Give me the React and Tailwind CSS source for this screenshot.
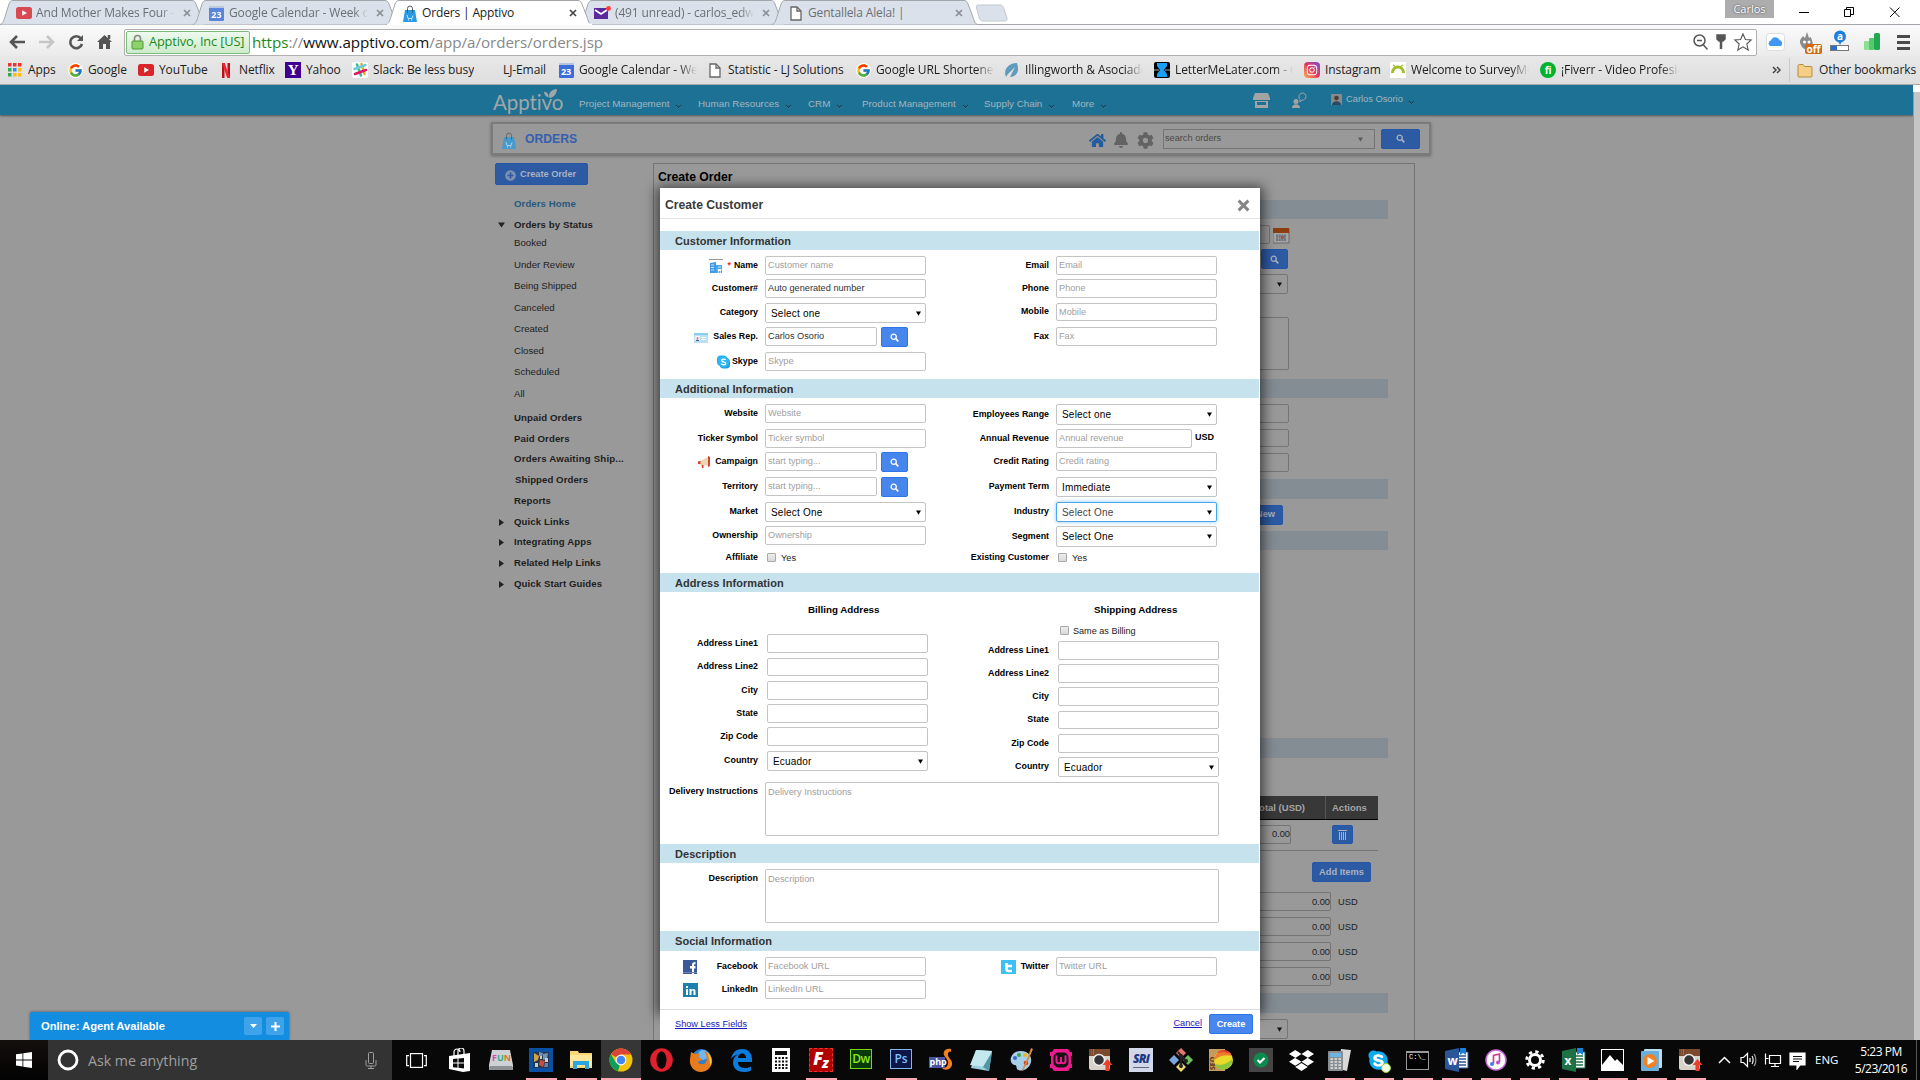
import React from 'react';
import { FaDropbox, FaSkype, FaInstagram, FaHome, FaBell, FaCog } from 'react-icons/fa';
import { FcGoogle } from 'react-icons/fc';

/* ---------- small shared icons ---------- */
const Close = ({ c = '#8a8f95' }) => (
  <svg width="8" height="8" viewBox="0 0 8 8"><path d="M1 1l6 6M7 1L1 7" stroke={c} strokeWidth="1.7" /></svg>
);
const Mag = () => (
  <svg width="9" height="9" viewBox="0 0 9 9" fill="none" stroke="currentColor"><circle cx="3.700" cy="3.700" r="2.600" strokeWidth="1.300" /><path d="M5.700 5.700L8.300 8.300" strokeWidth="1.700" /></svg>
);
const Chev = () => (
  <svg width="7" height="5" viewBox="0 0 8 5" fill="none"><path d="M1 .8L4 3.800 7 .8" stroke="#123d52" strokeWidth="1.200" /><path d="M1 1.800L4 4.800 7 1.800" stroke="#6d98ab" strokeWidth=".5" /></svg>
);
const Arrow = ({ c = '#000' }) => (
  <svg width="5" height="5" viewBox="0 0 5 5"><path d="M0 .4h5L2.500 4.800z" fill={c} /></svg>
);
const YT = () => (
  <svg width="16" height="12" viewBox="0 0 16 12"><rect width="16" height="12" rx="2.500" fill="#d9252a" /><path d="M6.200 3.200v5.600L11 6z" fill="#fff" /></svg>
);
const Cal23 = () => (
  <span className="flex h-[15px] w-[15px] items-center justify-center rounded-[1px] border-t-2 border-[#b4c2dc] bg-[#3c6edb] font-['Open_Sans'] text-[9px] leading-none font-bold text-white">23</span>
);
const Bag = () => (
  <svg width="14" height="17" viewBox="0 0 14 17"><path d="M4.500 7V3.500a2.500 2.500 0 015 0V7" fill="none" stroke="#555" strokeWidth="1" /><path d="M2 5h10l2 12H0z" fill="#2a9be0" /><path d="M4.500 5v2.500M9.500 5v2.500" stroke="#24506e" strokeWidth=".9" /><path d="M4 10l1 3.500h4l1-3" fill="none" stroke="#bfe4fa" strokeWidth="1" /><circle cx="5.500" cy="15" r=".7" fill="#bfe4fa" /><circle cx="8.700" cy="15" r=".7" fill="#bfe4fa" /></svg>
);
const Page = () => (
  <svg width="12" height="15" viewBox="0 0 12 15" fill="#fff" stroke="#666" strokeWidth="1.300"><path d="M1 1h6l4 4v9H1z" /><path d="M7 1v4h4" fill="none" /></svg>
);
const Mail = () => (
  <svg width="17" height="14" viewBox="0 0 17 14"><path d="M0 2h14v11H0z" fill="#5a2a9c" /><path d="M1 4l6 4 6-4" stroke="#fff" strokeWidth="1.800" fill="none" /><circle cx="14.500" cy="2.500" r="2.400" fill="#ff3b3b" /></svg>
);

/* ---------- browser tabs ---------- */
function Tab({ icon, title, active, dim }) {
  return (
    <div className={active ? 'relative z-10 -mr-[14px] h-[25px] w-[207px] shrink-0' : 'relative -mr-[14px] h-[25px] w-[207px] shrink-0'}>
      <svg className="absolute inset-0" width="207" height="25" viewBox="0 0 207 25">
        <path d="M0 24.500C3 24 4 20 5.500 15L9 4C10 1.500 11 .5 13 .5H192C194 .5 195 1.500 196 4L201 17C202 21 203 24 206 24.500" fill={active ? '#fff' : '#dbe1ea'} stroke="#a3a7ac" strokeWidth="1" />
        {active && <path d="M1 24.500H206" stroke="#fff" strokeWidth="2" />}
      </svg>
      <div className="relative flex h-[26px] items-center pl-[15px]">
        <span className="flex w-[17px] shrink-0 items-center justify-center">{icon}</span>
        <span className={(active ? 'text-[#222] ' : 'text-[#6b6f75] ') + (dim ? '[mask-image:linear-gradient(to_right,#000_90%,transparent)] ' : '') + 'ml-[4px] w-[139px] overflow-hidden text-[12px] tracking-[-0.150px] whitespace-nowrap'}>{title}</span>
        <span className="ml-[8px] flex"><Close c={active ? '#444' : '#8a8f95'} /></span>
      </div>
    </div>
  );
}

const bookmarks = [
  { w: 'w-[60px]', t: 'Apps', i: <svg width="14" height="14" viewBox="0 0 14 14">{['#e33', '#e33', '#e33', '#3a5', '#38e', '#fb1', '#3a5', '#fb1', '#fb1'].map((c, k) => <rect key={k} x={(k % 3) * 5} y={Math.floor(k / 3) * 5} width="3.500" height="3.500" fill={c} />)}</svg> },
  { w: 'w-[71px]', t: 'Google', i: <span className="rounded-full bg-white"><FcGoogle size={15} /></span> },
  { w: 'w-[80px]', t: 'YouTube', i: <YT /> },
  { w: 'w-[67px]', t: 'Netflix', i: <svg width="8" height="15" viewBox="0 0 8 15"><path d="M0 0h2.500v15H0zM5.500 0H8v15H5.500z" fill="#b5121b" /><path d="M0 0h2.800L8 15H5.200z" fill="#f02530" /></svg> },
  { w: 'w-[67px]', t: 'Yahoo', i: <span className="flex h-4 w-4 items-center justify-center bg-[#400090] font-['Liberation_Serif'] text-[15px] leading-none font-bold text-white">Y</span> },
  { w: 'w-[130px]', t: 'Slack: Be less busy', i: <svg width="16" height="16" viewBox="0 0 16 16" strokeWidth="2.500" strokeLinecap="round"><rect width="16" height="16" rx="2" fill="#fff" /><path d="M5 2.500l4 11" stroke="#3eb991" /><path d="M9.500 2l3 10" stroke="#e9a820" /><path d="M2.500 7l11-4" stroke="#70cadb" /><path d="M3 12l11-4" stroke="#e01765" /></svg> },
  { w: 'w-[76px]', t: 'LJ-Email', i: null },
  { w: 'w-[149px]', t: 'Google Calendar - We', i: <Cal23 />, f: 1 },
  { w: 'w-[148px]', t: 'Statistic - LJ Solutions', i: <Page /> },
  { w: 'w-[149px]', t: 'Google URL Shortener', i: <span className="rounded-full bg-white"><FcGoogle size={15} /></span>, f: 1 },
  { w: 'w-[150px]', t: 'Illingworth & Asociados', i: <svg width="16" height="16" viewBox="0 0 16 16"><path d="M2 15C-1 8 4 1 13 1c3 9-1 14-7 14L11 5 4 12z" fill="#5e9bbd" /></svg>, f: 1 },
  { w: 'w-[150px]', t: 'LetterMeLater.com - C', i: <svg width="16" height="16" viewBox="0 0 16 16"><rect width="16" height="16" rx="2" fill="#000" /><path d="M3 1h10v3L10 8l3 4v3H3v-3l3-4-3-4z" fill="#18a0f5" /><path d="M0 8h5M11 8h5" stroke="#555" strokeWidth="2" /></svg>, f: 1 },
  { w: 'w-[86px]', t: 'Instagram', i: <span className="flex h-4 w-4 items-center justify-center rounded-[4px] bg-gradient-to-tr from-[#fdb04a] via-[#e0305e] to-[#7a3bd0] text-white"><FaInstagram size={12} /></span> },
  { w: 'w-[150px]', t: 'Welcome to SurveyMon', i: <svg width="16" height="16" viewBox="0 0 16 16"><rect width="16" height="16" fill="#fff" /><path d="M2.500 11c0-8 11-8 11 0" fill="none" stroke="#a0bd2c" strokeWidth="3" /><path d="M3 3l3 2M13 3l-3 2" stroke="#a0bd2c" strokeWidth="1.500" /></svg>, f: 1 },
  { w: 'w-[150px]', t: '¡Fiverr - Video Profesion', i: <span className="flex h-4 w-4 items-center justify-center rounded-full bg-[#00b22d] text-[10px] leading-none font-bold text-white">fi</span>, f: 1 },
];

function Chrome() {
  return (
    <div className="h-[85px] shrink-0 bg-white font-['Open_Sans',sans-serif]">
      <div className="flex h-6 items-start">
        <Tab icon={<span className="opacity-80"><YT /></span>} title="And Mother Makes Four - Y" dim />
        <Tab icon={<span className="opacity-80"><Cal23 /></span>} title="Google Calendar - Week of" dim />
        <Tab icon={<Bag />} title="Orders | Apptivo" active />
        <Tab icon={<Mail />} title="(491 unread) - carlos_edwa" dim />
        <Tab icon={<Page />} title="Gentallela Alela! |" />
        <svg className="mt-1 ml-[10px]" width="33" height="18" viewBox="0 0 33 18"><path d="M3 1h22c2 0 3 1 3.500 2.500L32 14c.5 2-.5 3-2 3H8c-2 0-3-1-3.500-2.500L1.500 4C1 2 1.500 1 3 1z" fill="#dbe1ea" stroke="#c3c8cf" /></svg>
        <div className="flex-1" />
        <div className="flex h-[18px] w-[49px] items-center justify-center bg-[#adadad] text-[11px] text-white [text-shadow:0_0_2px_#333]">Carlos</div>
        <svg className="ml-[25px]" width="121" height="24" viewBox="0 0 121 24" fill="none" stroke="#000"><path d="M0 12.500h10" /><path d="M45.500 9.500h6v7h-6zM47.500 9V7.500h7v7H52" /><path d="M91 7.500l9.500 9.500M100.500 7.500L91 17" /></svg>
      </div>
      <div className="flex h-8 items-center border-t border-[#a3a7ac] bg-gradient-to-b from-[#fafafa] to-[#ebebeb] pt-[3px]">
        <svg className="ml-[9px] shrink-0" width="106" height="20" viewBox="0 0 106 20" fill="none" strokeWidth="2.600">
          <path d="M16 10H2M8 4L2 10l6 6" stroke="#555" />
          <path d="M30 10h14M38 4l6 6-6 6" stroke="#c6c6c6" />
          <path d="M72 6.500A6 6 0 1073 12" stroke="#555" /><path d="M74 3v6h-6z" fill="#555" stroke="none" />
          <path d="M88 10l7.500-7 7.500 7h-2v7h-4v-5h-3v5h-4v-7z" fill="#555" stroke="none" /><path d="M100 3v4" stroke="#555" />
        </svg>
        <div className="ml-[9px] flex h-[27px] w-[1633px] items-center rounded-[2px] border border-[#b0b0b0] bg-white">
          <div className="ml-px flex h-[23px] w-[124px] shrink-0 items-center rounded-[2px] border border-[#7dbb7a] bg-gradient-to-b from-[#eefaee] to-[#cdebcb] pl-1">
            <svg width="13" height="16" viewBox="0 0 13 16"><path d="M3.500 8V4.500a3 3 0 016 0V8" fill="none" stroke="#888" strokeWidth="1.600" /><rect x="1" y="7" width="11" height="8" rx="1" fill="#8fd16a" stroke="#4f9a3a" /></svg>
            <span className="ml-[5px] text-[12.800px] tracking-[-0.150px] whitespace-nowrap text-[#1a8a1a]">Apptivo, Inc [US]</span>
          </div>
          <span className="ml-[2px] text-[15.200px] tracking-[-0.060px] whitespace-nowrap text-[#888]"><span className="text-[#1a8a1a]">https</span>://<span className="text-[#111]">www.apptivo.com</span>/app/a/orders/orders.jsp</span>
          <div className="flex-1" />
          <svg className="mr-[2px]" width="62" height="20" viewBox="0 0 62 20" fill="none" stroke="#555" strokeWidth="1.500">
            <circle cx="7.500" cy="8.500" r="5.500" /><path d="M5 8.500h5M11.500 13l4 4.500" /><path d="M25 3h8v4l-2 2h-4l-2-2z" fill="#555" /><path d="M29 9v8" strokeWidth="2.500" />
            <path d="M51 2l2.400 5.500 5.800.5-4.400 4 1.400 6-5.200-3.200L45.800 18l1.400-6-4.400-4 5.800-.5z" strokeWidth="1.100" />
          </svg>
        </div>
        <svg className="ml-[9px] shrink-0" width="150" height="24" viewBox="0 0 150 24">
          <rect x=".5" y="3.500" width="18" height="17" rx="3" fill="#fff" stroke="#ddd" /><path d="M4 16a3 3 0 011-5.500 4.500 4.500 0 018.500-.5A3.500 3.500 0 0115 16z" fill="#3f98f5" />
          <path d="M35 15c-3-5 1-7 2-9l2 2 2-6 2 6 2-1c0 3 3 5 1 9-2 5-10 4-11-1z" fill="#8b8b8b" /><circle cx="38.500" cy="12" r="1.500" fill="#fff" /><circle cx="43" cy="12" r="1.500" fill="#fff" />
          <rect x="39" y="14" width="17" height="10" rx="2" fill="#cf6a13" /><text x="40.500" y="22.500" fontSize="10" fontWeight="bold" fill="#fff" fontFamily="Open Sans">off</text>
          <circle cx="74" cy="6.500" r="6" fill="#1c7fe0" /><path d="M72 11h4l-2 4z" fill="#1c7fe0" /><text x="71" y="10" fontSize="10" fontWeight="bold" fill="#fff" fontFamily="Open Sans">a</text>
          <rect x="64.500" y="15.500" width="18" height="5" fill="#fff" stroke="#777" /><path d="M65 16h6v4h-6z" fill="#2a6fd0" />
          <rect x="98" y="11" width="5" height="9" rx="1" fill="#8be08f" /><rect x="103" y="8" width="5" height="12" rx="1" fill="#54c96e" /><rect x="108" y="3" width="6" height="17" rx="1.500" fill="#22a853" />
          <path d="M131 6.500h13M131 12.500h13M131 18.500h13" stroke="#4a4a4a" strokeWidth="3" />
        </svg>
      </div>
      <div className="flex h-[29px] items-center border-b border-[#a8a8a8] bg-gradient-to-b from-[#e8e8e8] to-[#dedede] pl-[7px] text-[12px] tracking-[-0.1px] text-[#1c1c1c]">
        {bookmarks.map((b) => (
          <div key={b.t} className={b.w + ' flex shrink-0 items-center'}>
            <span className="flex w-4 shrink-0 justify-center">{b.i}</span>
            <span className={(b.f ? '[mask-image:linear-gradient(to_right,#000_85%,transparent)] ' : '') + 'ml-[5px] max-w-[118px] overflow-hidden whitespace-nowrap'}>{b.t}</span>
          </div>
        ))}
        <div className="flex-1" />
        <svg width="10" height="8" viewBox="0 0 10 8" fill="none" stroke="#444" strokeWidth="1.500"><path d="M1 1l3 3-3 3M5 1l3 3-3 3" /></svg>
        <div className="ml-[7px] h-6 w-px bg-[#bccbe0]" />
        <svg className="ml-[7px]" width="16" height="15" viewBox="0 0 16 15"><path d="M1 3c0-1 .5-1.500 1.500-1.500H6l1.500 2H14c.7 0 1 .5 1 1V13c0 .7-.3 1-1 1H2c-.7 0-1-.3-1-1z" fill="#f5cf85" stroke="#b98a3a" /></svg>
        <span className="mr-[7px] ml-[6px] w-[94px] whitespace-nowrap">Other bookmarks</span>
      </div>
    </div>
  );
}

/* ---------- application ---------- */
const nav = [
  ['Project Management', 'w-[119px]'], ['Human Resources', 'w-[110px]'], ['CRM', 'w-[54px]'],
  ['Product Management', 'w-[122px]'], ['Supply Chain', 'w-[88px]'], ['More', 'w-[181px]'],
];

function AppBar() {
  return (
    <div className="flex h-[30px] w-[1913px] shrink-0 items-start bg-[#1d7194] pl-[493px] text-[9.800px] text-[#a3b6be] shadow-[0_1px_2px_#555]">
      <div className="relative mt-[5px] w-[86px] font-['Lato'] text-[20.500px] leading-[24px] tracking-[-0.1px] text-[#a0a6a9]">Apptivo
        <svg className="absolute -top-[2px] left-[50px]" width="15" height="11" viewBox="0 0 16 12"><path d="M7 11C5 5 10 1 15 1c0 5-3 9-8 10zM5 10C2 9 1 6 1 4c3 0 5 2 5 6z" fill="#a0a6a9" /></svg>
      </div>
      {nav.map(([t, w]) => (
        <div key={t} className={w + ' mt-[12px] flex shrink-0 items-center leading-[13px] whitespace-nowrap'}>{t}<span className="mt-[6px] ml-[6px]"><Chev /></span></div>
      ))}
      <svg className="mt-2" width="17" height="16" viewBox="0 0 17 16" fill="#a3a3a3"><path d="M2 0h13l2 5v2H0V5z" /><path d="M2 8h13v7H2z" /><path d="M4 9h9v3H4z" fill="#1d7194" /></svg>
      <svg className="mt-[7px] ml-[21px]" width="16" height="17" viewBox="0 0 16 17"><circle cx="5" cy="9.500" r="2.500" fill="#a3a3a3" /><path d="M1 16c0-5 8-5 8 0z" fill="#a3a3a3" /><path d="M8 5a3.500 3.500 0 113 3l-2 2V7.500A3 3 0 018 5z" fill="none" stroke="#a3a3a3" /></svg>
      <svg className="mt-[9px] ml-[24px]" width="11" height="11" viewBox="0 0 11 11"><rect width="11" height="11" fill="#898989" /><circle cx="5.500" cy="4" r="2.300" fill="#4a3a35" /><path d="M1 11c0-5 9-5 9 0z" fill="#254a62" /></svg>
      <span className="mt-[8px] ml-[4px] flex items-center text-[9.300px] leading-[12px] whitespace-nowrap">Carlos Osorio<span className="mt-[6px] ml-[5px]"><Chev /></span></span>
    </div>
  );
}

const side = [
  ['Orders Home', 'mt-[12px] h-[14px] font-bold tracking-[0.080px] text-[#275a7e]'],
  ['Orders by Status', 'mt-[7px] h-[14px] font-bold tracking-[0.080px]', 'd'],
  ['Booked', 'mt-[4px] h-[14px]'],
  ['Under Review', 'mt-[8px] h-[14px]'],
  ['Being Shipped', 'mt-[7px] h-[14px]'],
  ['Canceled', 'mt-[8px] h-[14px]'],
  ['Created', 'mt-[7px] h-[14px]'],
  ['Closed', 'mt-[8px] h-[14px]'],
  ['Scheduled', 'mt-[7px] h-[14px]'],
  ['All', 'mt-[8px] h-[14px]'],
  ['Unpaid Orders', 'mt-[10px] h-[14px] font-bold tracking-[0.1px]'],
  ['Paid Orders', 'mt-[7px] h-[14px] font-bold tracking-[0.1px]'],
  ['Orders Awaiting Ship...', 'mt-[6px] h-[14px] font-bold tracking-[0.200px]'],
  ['Shipped Orders', 'mt-[7px] h-[14px] pl-px font-bold tracking-[0.060px]'],
  ['Reports', 'mt-[7px] h-[14px] font-bold tracking-[0.1px]'],
  ['Quick Links', 'mt-[7px] h-[14px] font-bold tracking-[0.1px]', 'r'],
  ['Integrating Apps', 'mt-[6px] h-[14px] font-bold tracking-[0.1px]', 'r'],
  ['Related Help Links', 'mt-[7px] h-[14px] font-bold tracking-[0.040px]', 'r'],
  ['Quick Start Guides', 'mt-[7px] h-[14px] font-bold tracking-[0.080px]', 'r'],
];

function Sidebar() {
  return (
    <div className="mt-[8px] w-[158px] shrink-0 text-[9.650px] text-[#1e1e1e]">
      <div className="flex h-[22px] w-[93px] items-center rounded-[2px] border border-[#2457a8] bg-[#2c5aa3] pl-[9px] font-bold text-[#a9b2c0]">
        <svg width="11" height="11" viewBox="0 0 11 11" className="mt-[2px]"><circle cx="5.500" cy="5.500" r="5.300" fill="#7d90b3" /><path d="M5.500 2.500v6M2.500 5.500h6" stroke="#2c5aa3" strokeWidth="1.700" /></svg>
        <span className="ml-[4px] pt-px text-[9.200px] whitespace-nowrap">Create Order</span>
      </div>
      {side.map(([t, c, k]) => (
        <div key={t} className={c + ' flex items-center whitespace-nowrap'}>
          <span className="w-[19px] shrink-0 pl-[3px]">
            {k === 'd' && <svg width="7" height="6" viewBox="0 0 7 6"><path d="M0 .5h7L3.500 5.500z" fill="#222" /></svg>}
            {k === 'r' && <svg width="6" height="7" viewBox="0 0 6 7"><path d="M1 0v7l5-3.500z" fill="#222" /></svg>}
          </span>{t}
        </div>
      ))}
    </div>
  );
}

const DInput = ({ c, children }) => <div className={c + ' flex shrink-0 items-center justify-end rounded-[2px] border border-[#757575] text-[9.300px] text-[#222]'}>{children}</div>;
const DBtn = ({ c, children }) => <div className={c + ' flex shrink-0 items-center justify-center rounded-[2px] border border-[#2457a8] bg-[#2c5aa3] text-[9.300px] font-bold whitespace-nowrap text-[#a9b2c0]'}>{children}</div>;
const DBar = ({ c }) => <div className={c + ' ml-[8px] w-[726px] shrink-0 bg-[#858d94]'} />;

/* order form that stays behind the dialog */
function OrderPanel() {
  return (
    <div className="mt-[8px] flex h-[877px] w-[762px] flex-col overflow-hidden border border-b-0 border-[#757575]">
      <div className="mt-[5px] ml-[4px] h-[17px] text-[12.200px] leading-[16px] font-bold text-[#000]">Create Order</div>
      <DBar c="mt-[14px] h-[19px]" />
      <div className="mt-[6px] flex h-[19px]"><DInput c="ml-[455px] h-[19px] w-[161px]" />
        <svg className="mt-[3px] ml-[3px]" width="17" height="16" viewBox="0 0 17 16"><rect y="1" width="16" height="14" fill="#a5a5a5" stroke="#555" strokeWidth=".7" /><path d="M0 0h16v5H0z" fill="#8c3d12" /><path d="M3 6.500h10v6.500H3z" fill="#6d7380" /><path d="M5.500 6v7M8 6v7M10.500 6v7M3 10h10" stroke="#9a9a9a" strokeWidth=".8" /><rect x="8" y="8" width="3" height="3" fill="#a5573a" /></svg>
      </div>
      <DBtn c="mt-[5px] ml-[607px] h-[20px] w-[27px]"><Mag /></DBtn>
      <DInput c="mt-[5px] ml-[473px] h-[20px] w-[161px] pr-[5px]"><Arrow c="#111" /></DInput>
      <DInput c="mt-[23px] ml-[335px] h-[53px] w-[300px]" />
      <DBar c="mt-[9px] h-[19px]" />
      <DInput c="mt-[6px] ml-[474px] h-[19px] w-[161px]" />
      <DInput c="mt-[6px] ml-[474px] h-[18px] w-[161px]" />
      <DInput c="mt-[6px] ml-[474px] h-[19px] w-[161px]" />
      <DBar c="mt-[7px] h-[20px]" />
      <DBtn c="mt-[6px] ml-[573px] h-[20px] w-[56px]"><span className="ml-[21px]">New</span></DBtn>
      <DBar c="mt-[6px] h-[19px]" />
      <DBar c="mt-[188px] h-[20px]" />
      <div className="mt-[38px] ml-[8px] flex h-[24px] w-[716px] items-center border-b border-black bg-[#383838] text-[9.500px] font-bold text-[#a5a5a5]">
        <span className="w-[643px] pt-px text-right whitespace-nowrap">Total (USD)</span><span className="ml-[20px] h-full w-px bg-[#555]" /><span className="ml-[6px] pt-px">Actions</span>
      </div>
      <div className="ml-[8px] flex h-[31px] w-[716px] border-b border-[#757575] pt-[5px]">
        <DInput c="ml-[569px] h-[19px] w-[60px] pt-px">0.00</DInput>
        <DBtn c="ml-[41px] h-[19px] w-[21px]"><svg width="9" height="11" viewBox="0 0 9 11" stroke="#a9b2c0"><path d="M0 1.500h9M1.500 3v8M3.500 3v8M5.500 3v8M7.500 3v8" fill="none" strokeWidth="1" /></svg></DBtn>
      </div>
      <DBtn c="mt-[11px] ml-[658px] h-[20px] w-[59px] pt-px">Add Items</DBtn>
      <div className="mt-[10px] flex flex-col gap-[6px]">
        {[1, 2, 3, 4].map((n) => <div key={n} className="flex h-[19px] items-center"><DInput c="ml-[516px] h-[19px] w-[161px] pt-[2px]">0.00</DInput><span className="ml-[7px] pt-[2px] text-[9.300px] text-[#222]">USD</span></div>)}
      </div>
      <DBar c="mt-[7px] h-[20px]" />
      <DInput c="mt-[6px] ml-[473px] h-[20px] w-[161px] pr-[5px]"><Arrow c="#111" /></DInput>
    </div>
  );
}

/* ---------- dialog ---------- */
const Bar = ({ c, children }) => <div className={c + ' flex w-[599px] shrink-0 items-center bg-[#c5e2ed] pl-[15px] text-[11px] font-bold tracking-[0.060px] text-[#333]'}><span className="pt-px">{children}</span></div>;

const Box = () => <span className="h-[9px] w-[9px] rounded-[1px] border border-[#a9a9a9] bg-gradient-to-b from-[#eee] to-[#d8d8d8]" />;

function Row({ c, label, icon, ph, val, sel, find, w = 'w-[161px]', after, check, focus, shift }) {
  return (
    <div className={c + ' flex shrink-0 items-center'}>
      <div className="flex h-full w-[98px] shrink-0 items-center justify-end text-[8.850px] font-bold whitespace-nowrap text-black">{icon}{label}</div>
      {check ? (
        <div className="flex items-center pb-px pl-[9px] text-[9.200px] text-[#222]"><Box /><span className="ml-[5px] pt-[2px]">{check}</span></div>
      ) : (
        <div className={(find ? 'w-[112px]' : w) + (shift ? ' ml-[9px]' : ' ml-[7px]') + (focus ? ' border-[#4aa8ea] shadow-[0_0_4px_#8cc8f5]' : ' border-[#c4c4c4]') + (sel ? ' pl-[5px] text-[10px] tracking-[0.200px]' : ' pt-px pl-[2px] text-[9.200px]') + (focus ? ' text-[#444]' : sel ? ' text-black' : ph ? ' text-[#a0a0a0]' : ' text-[#333]') + ' flex h-full items-center rounded-[2px] border bg-white pr-[4px] whitespace-nowrap'}>
          <span className="flex-1">{ph || val || sel}</span>{sel && <Arrow />}
        </div>
      )}
      {find && <div className="ml-[4px] flex h-[20px] w-[27px] items-center justify-center self-start rounded-[2px] border border-[#2f74e8] bg-[#4787ed] text-white"><Mag /></div>}
      {after}
    </div>
  );
}

const Building = () => <svg className="mr-[4px]" width="14" height="14" viewBox="0 0 14 14"><path d="M0 0h14v1H0z" fill="#999" /><path d="M1 4l6-1v11H1z" fill="#3d9be9" /><path d="M7 6h6v8H7z" fill="#4aa4ee" /><path d="M2 6h3M2 8.500h3M2 11h3M9 8h3" stroke="#cfe8fb" /><path d="M8.500 10h4l-.5 2h-3z" fill="#fff" /><circle cx="9.500" cy="13" r=".7" fill="#fff" /><circle cx="11.500" cy="13" r=".7" fill="#fff" /></svg>;
const Card = () => <svg className="mt-[2px] mr-[5px]" width="14" height="10" viewBox="0 0 14 10"><rect width="14" height="10" fill="#b9e0f7" /><path d="M0 0h14v2H0z" fill="#8acbf0" /><path d="M1.500 3h4v5h-4z" fill="#fff" /><circle cx="3.500" cy="5" r="1" fill="#c66" /><path d="M2 8c0-2 3-2 3 0z" fill="#447" /><path d="M7 4.500h5M7 6.500h5" stroke="#fff" /></svg>;
const SkypeIcon = () => <svg className="mr-[2px]" width="13" height="14" viewBox="0 0 14 14"><rect width="11" height="11" rx="4" fill="#22b2ee" /><rect x="3" y="3" width="11" height="11" rx="4" fill="#1c9fe0" /><circle cx="7" cy="7" r="6" fill="#2db6f0" /><path d="M9.300 4.800C8.500 3.500 5 3.500 5 5.300c0 2 4.300 1 4.300 3.200 0 1.800-3.800 2-4.800.3" fill="none" stroke="#fff" strokeWidth="1.500" /></svg>;
const Horn = () => <svg className="mr-[4px]" width="13" height="12" viewBox="0 0 13 12"><path d="M2 5l8-4v9L2 8z" fill="#ead9b4" /><path d="M10 0l2 1v9l-2 1z" fill="#d8432e" /><path d="M0 5.500l2.500-.8v3.600L0 8zM3.500 8.500l2 .5v3H4z" fill="#d8432e" /></svg>;
const Fb = () => <svg className="mr-[20px]" width="14" height="14" viewBox="0 0 14 14"><rect width="14" height="14" fill="#3b5998" /><path d="M9 14V8.500H7V6h2V4.800C9 3 10 2 12.500 2v2.300c-1.200 0-1.500.2-1.500 1V6h1.500v2.500H11V14z" fill="#fff" /><path d="M0 12.500h14" stroke="#6d84b4" /></svg>;
const Li = () => <svg className="mr-[24px]" width="15" height="14" viewBox="0 0 15 14"><rect width="15" height="14" fill="#1d7fae" /><path d="M3 6h2v6H3zM3 3h2v2H3zM6.500 6h2v1c1-1.700 4-1.500 4 1v4h-2V8.500c0-1.200-2-1.200-2 0V12h-2z" fill="#fff" /></svg>;
const Tw = () => <svg className="mr-[5px]" width="15" height="14" viewBox="0 0 15 14"><rect width="15" height="14" fill="#3cc0f5" /><path d="M5.500 3v6c0 1.500.8 2 2 2H11M5.500 6H11" fill="none" stroke="#fff" strokeWidth="2.600" /></svg>;

function Dialog() {
  return (
    <div className="absolute top-[188px] left-[660px] z-20 h-[852px] w-[600px]">
      <div className="h-[822px] bg-white shadow-[0_2px_12px_3px_rgba(0,0,0,0.62)]">
        <div className="flex h-[31px] items-center justify-between border-b border-[#e4e4e4] pr-[10px] pl-[5px]">
          <span className="pt-[4px] text-[12.200px] font-bold text-[#3a3a3a]">Create Customer</span>
          <svg className="mt-[4px]" width="13" height="13" viewBox="0 0 12 12"><path d="M1.500 1.500l9 9M10.500 1.500l-9 9" stroke="#868686" strokeWidth="2.800" /></svg>
        </div>
        <Bar c="mt-[12px] h-[19px]">Customer Information</Bar>
        <div className="flex h-[129px]">
          <div className="w-[291px]">
            <Row c="mt-[6px] h-[19px]" label={<><span className="mr-[3px] text-[#e22]">*</span>Name</>} icon={<Building />} ph="Customer name" />
            <Row c="mt-[4px] h-[19px]" label="Customer#" val="Auto generated number" />
            <Row c="mt-[5px] h-[20px]" label="Category" sel="Select one" />
            <Row c="mt-[4px] h-[19px]" label="Sales Rep." icon={<Card />} val="Carlos Osorio" find />
            <Row c="mt-[6px] h-[19px]" label="Skype" icon={<SkypeIcon />} ph="Skype" />
          </div>
          <div>
            <Row c="mt-[6px] h-[19px]" label="Email" ph="Email" />
            <Row c="mt-[4px] h-[19px]" label="Phone" ph="Phone" />
            <Row c="mt-[5px] h-[18px]" label="Mobile" ph="Mobile" />
            <Row c="mt-[6px] h-[19px]" label="Fax" ph="Fax" />
          </div>
        </div>
        <Bar c="h-[19px]">Additional Information</Bar>
        <div className="flex h-[175px]">
          <div className="w-[291px]">
            <Row c="mt-[6px] h-[19px]" label="Website" ph="Website" />
            <Row c="mt-[6px] h-[19px]" label="Ticker Symbol" ph="Ticker symbol" />
            <Row c="mt-[4px] h-[19px]" label="Campaign" icon={<Horn />} ph="start typing..." find />
            <Row c="mt-[6px] h-[19px]" label="Territory" ph="start typing..." find />
            <Row c="mt-[6px] h-[20px]" label="Market" sel="Select One" />
            <Row c="mt-[4px] h-[19px]" label="Ownership" ph="Ownership" />
            <Row c="mt-[5px] h-[16px]" label="Affiliate" check="Yes" />
          </div>
          <div>
            <Row c="mt-[6px] h-[21px]" label="Employees Range" sel="Select one" />
            <Row c="mt-[4px] h-[19px]" label="Annual Revenue" ph="Annual revenue" w="w-[136px]" after={<span className="ml-[3px] pb-[2px] text-[9px] font-bold">USD</span>} />
            <Row c="mt-[4px] h-[19px]" label="Credit Rating" ph="Credit rating" />
            <Row c="mt-[6px] h-[20px]" label="Payment Term" sel="Immediate" />
            <Row c="mt-[5px] h-[20px]" label="Industry" sel="Select One" focus />
            <Row c="mt-[4px] h-[21px]" label="Segment" sel="Select One" />
            <Row c="mt-[3px] h-[16px]" label="Existing Customer" check="Yes" />
          </div>
        </div>
        <Bar c="h-[19px]">Address Information</Bar>
        <div className="flex h-[190px]">
          <div className="w-[291px]">
            <div className="mt-[11px] h-[14px] pl-[148px] text-[9.800px] leading-[14px] font-bold">Billing Address</div>
            <Row c="mt-[17px] h-[19px]" label="Address Line1" shift />
            <Row c="mt-[5px] h-[18px]" label="Address Line2" shift />
            <Row c="mt-[5px] h-[19px]" label="City" shift />
            <Row c="mt-[4px] h-[19px]" label="State" shift />
            <Row c="mt-[4px] h-[19px]" label="Zip Code" shift />
            <Row c="mt-[5px] h-[20px]" label="Country" sel="Ecuador" shift />
          </div>
          <div>
            <div className="mt-[11px] h-[14px] pl-[143px] text-[9.800px] leading-[14px] font-bold">Shipping Address</div>
            <div className="mt-[7px] flex h-[14px] items-center pl-[109px] text-[9.100px] text-[#222]"><span className="mb-px flex"><Box /></span><span className="ml-[4px] pt-px">Same as Billing</span></div>
            <Row c="mt-[3px] h-[19px]" label="Address Line1" shift />
            <Row c="mt-[4px] h-[19px]" label="Address Line2" shift />
            <Row c="mt-[4px] h-[19px]" label="City" shift />
            <Row c="mt-[5px] h-[18px]" label="State" shift />
            <Row c="mt-[5px] h-[19px]" label="Zip Code" shift />
            <Row c="mt-[4px] h-[20px]" label="Country" sel="Ecuador" shift />
          </div>
        </div>
        <div className="flex h-[62px]">
          <span className="w-[98px] pt-[3px] text-right text-[9px] leading-[13px] font-bold whitespace-nowrap">Delivery Instructions</span>
          <div className="ml-[7px] h-[54px] w-[454px] rounded-[2px] border border-[#c4c4c4] pt-[3px] pl-[2px] text-[9.300px] leading-[13px] text-[#a0a0a0]">Delivery Instructions</div>
        </div>
        <Bar c="h-[19px]">Description</Bar>
        <div className="flex h-[68px] pt-[6px]">
          <span className="w-[98px] pt-[3px] text-right text-[9px] leading-[13px] font-bold">Description</span>
          <div className="ml-[7px] h-[54px] w-[454px] rounded-[2px] border border-[#c4c4c4] pt-[3px] pl-[2px] text-[9.300px] leading-[13px] text-[#a0a0a0]">Description</div>
        </div>
        <Bar c="h-[20px]">Social Information</Bar>
        <div className="flex">
          <div className="w-[291px]">
            <Row c="mt-[6px] h-[19px]" label="Facebook" icon={<Fb />} ph="Facebook URL" />
            <Row c="mt-[4px] h-[19px]" label="LinkedIn" icon={<Li />} ph="LinkedIn URL" />
          </div>
          <div><Row c="mt-[6px] h-[19px]" label="Twitter" icon={<Tw />} ph="Twitter URL" /></div>
        </div>
      </div>
      <div className="relative -mt-[1px] flex h-[31px] items-start border-t border-[#dcdcdc] bg-white pl-[15px] text-[9.200px] text-[#1a1ab8]">
        <span className="mt-[8px] underline">Show Less Fields</span>
        <span className="mt-[7px] ml-auto underline">Cancel</span>
        <span className="mt-[4px] mr-[7px] ml-[7px] flex h-[20px] w-[44px] items-center justify-center rounded-[2px] border border-[#2f74e8] bg-[#4787ed] pt-px text-[9.200px] font-bold text-white">Create</span>
      </div>
    </div>
  );
}

function Application() {
  return (
    <div className="relative flex h-[955px] w-[1920px] shrink-0 overflow-hidden bg-[#999] font-['Liberation_Sans',Arial,sans-serif]">
      <div className="w-[1913px]">
        <AppBar />
        <div className="mt-[7px] ml-[491px] flex h-[33px] w-[940px] items-center border-2 border-[#7b7b7b] shadow-[0_1px_3px_#666]">
          <span className="mt-[4px] ml-[9px] opacity-75"><Bag /></span>
          <span className="mt-px ml-[9px] w-[564px] text-[12.200px] font-bold text-[#3560b0]">ORDERS</span>
          <FaHome size={17} color="#245b9c" className="mt-[4px] shrink-0" />
          <FaBell size={16} color="#636363" className="mt-[3px] ml-[7px] shrink-0" />
          <FaCog size={17} color="#636363" className="mt-[4px] ml-[8px] shrink-0" />
          <div className="ml-[9px] flex h-[20px] w-[212px] shrink-0 items-center justify-between border border-[#757575] pt-px pr-[11px] pl-[1px] text-[9.200px] text-[#4a4a4a]">search orders<Arrow c="#5c5c5c" /></div>
          <DBtn c="ml-[6px] h-[20px] w-[39px]"><Mag /></DBtn>
        </div>
        <div className="ml-[495px] flex"><Sidebar /><OrderPanel /></div>
      </div>
      <div className="w-[7px] bg-white pt-[7px]"><div className="h-full border-l border-[#999] bg-[#c6c6c6]" /></div>
      <div className="absolute top-[927px] left-[30px] flex h-[28px] w-[259px] items-center rounded-t-[2px] bg-[#138de0] pl-[11px] text-[11.200px] font-bold text-white shadow-[0_0_3px_#555]">
        <span className="w-[203px] tracking-[-0.020px] whitespace-nowrap">Online: Agent Available</span>
        <span className="flex h-[18px] w-[18px] items-center justify-center rounded-[2px] bg-[#3fa3ea]"><svg width="7" height="4"><path d="M0 0h7L3.500 4z" fill="#fff" /></svg></span>
        <span className="ml-[4px] flex h-[18px] w-[18px] items-center justify-center rounded-[2px] bg-[#3fa3ea]"><svg width="9" height="9"><path d="M4.500 0v9M0 4.500h9" stroke="#fff" strokeWidth="2" /></svg></span>
      </div>
    </div>
  );
}

/* ---------- taskbar ---------- */
const Office = ({ c, t }) => <svg width="24" height="24" viewBox="0 0 24 24"><path d="M11 4h12v16H11z" fill="#fff" stroke={c} /><path d="M14 8h7M14 11h7M14 14h7M14 17h7" stroke={c} strokeWidth="1.500" /><path d="M0 3l14-3v24L0 21z" fill={c} /><path d="M15 0h6v7l-3-2-3 2z" fill="#1b7fd6" /><text x="2.500" y="16.500" fontSize="12" fontWeight="bold" fill="#fff" fontFamily="Open Sans">{t}</text></svg>;
const Insta = () => <svg width="24" height="22" viewBox="0 0 24 22"><rect width="21" height="21" rx="2" fill="#d8d2c8" /><path d="M0 0h21v7H0z" fill="#7b4a2c" /><path d="M2 0h1v6H2z" fill="#d33" /><path d="M4 0h1v6H4z" fill="#3a3" /><circle cx="10" cy="11" r="5.500" fill="#333" stroke="#eee" strokeWidth="1.500" /><path d="M18.500 10l5 6h-3v6h-4v-6h-3z" fill="#e8402a" /></svg>;

const apps = [
  { k: 'fun', i: <svg width="24" height="22" viewBox="0 0 24 22"><path d="M3 1h18l3 15v4c0 1-1 1-2 1H2c-1 0-2 0-2-1v-4z" fill="#cfd2d4" /><rect y="17" width="24" height="4" rx="2" fill="#8d9194" /><text x="3" y="12" fontSize="9" fontWeight="bold" fontFamily="Open Sans"><tspan fill="#d4a">F</tspan><tspan fill="#3a8">U</tspan><tspan fill="#d72">N</tspan></text></svg> },
  { k: 'hero', u: 1, i: <svg width="24" height="24" viewBox="0 0 24 24"><rect width="24" height="24" fill="#0a50a5" /><path d="M4 4h16v16H4z" fill="#25364f" /><path d="M5 5l5 3-1 4-4 2z" fill="#d9a13c" /><path d="M10 4l4 1-1 4-3-1zM14 6l5-1-1 6-4 1z" fill="#6f95ba" /><path d="M11 12l5 1-2 6-4-2z" fill="#c94f3d" /><path d="M16 10h3v4h-3zM6 15h3v4H6zM11 8h2v3h-2z" fill="#c9cdd2" /><path d="M16 15h3v4h-4z" fill="#5a86b5" /></svg> },
  { k: 'files', u: 1, i: <svg width="24" height="22" viewBox="0 0 24 22"><path d="M1 2h8l1 2h13v15H1z" fill="#f8d775" /><path d="M1 6h22v11H1z" fill="#fce79a" /><path d="M4 20v-8h16v8h-4v-4H8v4z" fill="#2aa7e0" /></svg> },
  { k: 'chrome', u: 2, i: <svg width="24" height="24" viewBox="0 0 24 24"><circle cx="12" cy="12" r="11.500" fill="#f4c20d" /><path d="M12 12L2 6.300A11.500 11.500 0 0122 6.500H12z" fill="#db4437" /><path d="M12 12l-3 11.200A11.500 11.500 0 012 6.300L7 15z" fill="#0f9d58" /><circle cx="12" cy="12" r="5.400" fill="#fff" /><circle cx="12" cy="12" r="4.300" fill="#4285f4" /></svg> },
  { k: 'opera', i: <svg width="23" height="24" viewBox="0 0 23 24"><ellipse cx="11.500" cy="12" rx="11.300" ry="11.800" fill="#e0202c" /><ellipse cx="11.500" cy="12" rx="5" ry="8.800" fill="#080808" /></svg> },
  { k: 'ff', i: <svg width="24" height="24" viewBox="0 0 24 24"><circle cx="12.500" cy="11" r="10" fill="#2b7fd0" /><circle cx="14" cy="7" r="5" fill="#6cb8ee" /><path d="M2 4l4 2c2-1 4 0 5 1L9 9c1 1 3 1 4 2-1 2-3 2-4 3 1 3 6 3 8 0 2-4 0-8-2-11 6 2 9 7 8 12-1 5-6 9-11 9C5 24 0 18 1 11z" fill="#e87b1c" /><path d="M18 4c4 3 6 9 3 14 0-5-1-10-3-14z" fill="#f8c838" /></svg> },
  { k: 'edge', i: <svg width="21" height="23" viewBox="0 0 21 23"><path d="M0 10C1 4 5 0 11 0c7 0 10 5 10 10v3H7c0 4 3 6 7 6 2 0 4-.5 6-1.500v4C18 22.500 15 23 13 23 6 23 2 19 2 13.500 2 9.500 4 7 7 5.500 4 6 1.500 7.500 0 10zm7-1h8c0-3-1.500-4.500-4-4.500S7.300 6.500 7 9z" fill="#0b7bdc" /></svg> },
  { k: 'calc', i: <svg width="18" height="24" viewBox="0 0 18 24"><rect width="18" height="24" fill="#fff" /><path d="M3 3h12v4H3z" fill="#111" />{[10, 13.500, 17, 20].map((y) => <path key={y} d={`M3 ${y}h2M6.500 ${y}h2M10 ${y}h2M13.500 ${y}h2`} stroke="#111" strokeWidth="1.800" />)}</svg> },
  { k: 'fz', u: 1, i: <span className="flex h-6 w-6 items-center justify-center border border-dashed border-[#e33] bg-[#b00000] text-[17px] leading-none font-black text-white italic"><span className="-mt-[3px]">F</span><span className="mt-[5px] -ml-px text-[14px]">z</span></span> },
  { k: 'dw', i: <span className="-mt-[3px] flex h-5 w-[22px] items-center justify-center border border-[#7ad80e] bg-[#073a08] text-[12px] leading-none font-semibold tracking-[-0.5px] text-[#8fe81f]">Dw</span> },
  { k: 'ps', u: 1, i: <span className="-mt-[3px] flex h-5 w-[22px] items-center justify-center border border-[#7fb8f0] bg-[#0d1648] text-[12px] leading-none font-semibold text-[#7fc0ff]">Ps</span> },
  { k: 'php', i: <svg width="24" height="24" viewBox="0 0 24 24"><path d="M22 1c-6-1-8 3-7 6 1 3 5 5 4 9-1 3-3 4-6 4 2 3 9 2 10-3 1-6-5-7-4-11 0-2 2-3 3-2z" fill="#f08020" /><path d="M0 9h16v11H0z" fill="#4a54a0" /><text x=".5" y="17" fontSize="9" fontWeight="bold" fill="#fff" fontFamily="Open Sans">php</text></svg> },
  { k: 'note', u: 1, i: <svg width="24" height="24" viewBox="0 0 24 24"><path d="M7 2l16 1-3 20-18-3z" fill="#9ad0dd" /><path d="M7 2l16 1-6 16L1 17z" fill="#c3e8ee" /><path d="M14 19l9-15-3 19z" fill="#4f97a6" /></svg> },
  { k: 'paint', u: 1, i: <svg width="25" height="24" viewBox="0 0 25 24"><path d="M12 3c8 0 11 6 10 11-2 9-12 10-14 7-1-3 0-4-3-4C-1 15 1 3 12 3z" fill="#a8cfe8" /><circle cx="6" cy="10" r="2" fill="#3a68c8" /><circle cx="10" cy="7" r="2" fill="#39a846" /><circle cx="16" cy="7" r="2" fill="#e8b520" /><circle cx="17" cy="15" r="2.300" fill="#d33d28" /><path d="M22 0l2 1-5 12-5 10-1-1 5-11z" fill="#d98a37" /></svg> },
  { k: 'w', i: <svg width="22" height="22" viewBox="0 0 22 22"><path d="M4 0h14l2 3h2v4h-1v8h1v4h-2l-2 3H4l-2-3H0v-4h1V7H0V3h2z" fill="#ec1a8d" /><rect x="3.500" y="3.500" width="15" height="15" rx="5" fill="#141414" /><path d="M6.500 6.500v5.500c0 3 4.500 3 4.500 0V8v4c0 3 4.500 3 4.500 0V6.500" fill="none" stroke="#ec1a8d" strokeWidth="2" /></svg> },
  { k: 'ig', i: <Insta /> },
  { k: 'sri', i: <span className="flex h-6 w-6 flex-col items-center justify-center bg-[#d3d7ea] text-[12px] leading-none font-black tracking-[-0.8px] text-[#1c3a86] italic">SRi<span className="mt-[2px] h-px w-4 bg-[#667]" /></span> },
  { k: 'git', i: <svg width="24" height="24" viewBox="0 0 24 24"><path d="M12 0l5 5-5 5-5-5z" fill="#e8756a" /><path d="M5 7l5 5-5 5-5-5z" fill="#7aa6e0" /><path d="M19 7l5 5-5 5-5-5z" fill="#6fc05c" /><path d="M12 14l5 5-5 5-5-5z" fill="#ecd56a" /><path d="M9 4l8 9M12 7v13" stroke="#222" strokeWidth="2" /><circle cx="12" cy="8" r="2" fill="#222" /><circle cx="17" cy="13" r="2" fill="#222" /><circle cx="12" cy="18" r="2" fill="#222" /></svg> },
  { k: 'seo', i: <svg width="24" height="24" viewBox="0 0 24 24"><path d="M0 1h16v22H0z" fill="#c49b5c" /><text x="-22" y="6" fontSize="7" fontWeight="bold" fill="#5a3510" transform="rotate(-90)">SEO</text><circle cx="14.500" cy="12" r="9.500" fill="#e9d928" /><path d="M5.500 10a9.500 9.500 0 0117.500-2C17 6 10 8 5.500 12z" fill="#ef7a2d" /><path d="M8 5c4-5 12-3 14 1-5-2-10-2-14-1z" fill="#e2442d" /><path d="M6 16c6 2 12 0 17.500-5 0 6-4 10.500-9 10.500-4 0-7-2-8.500-5.500z" fill="#8cc63a" /></svg> },
  { k: 'chk', i: <span className="flex h-6 w-6 items-center justify-center bg-[#454545]"><svg width="16" height="16" viewBox="0 0 16 16"><circle cx="8" cy="8" r="7.500" fill="#0d8a50" /><path d="M4.500 8l2.500 2.500L11.500 6" fill="none" stroke="#fff" strokeWidth="2" /></svg></span> },
  { k: 'db', i: <FaDropbox size={25} color="#fff" /> },
];
const apps2 = [
  { k: 'calc2', i: <svg width="23" height="23" viewBox="0 0 23 23"><path d="M13 0l10 1-4 21-8-2z" fill="#d8d8d8" /><rect y="2" width="15" height="20" rx="1" fill="#8a8f94" /><path d="M2 4h11v4H2z" fill="#6db4e0" />{[10, 13, 16, 19].map((y) => <path key={y} d={`M2.500 ${y}h2.500M6.500 ${y}h2.500M10.500 ${y}h2.500`} stroke="#e6e6e6" strokeWidth="1.700" />)}</svg> },
  { k: 'sk', i: <span className="relative flex rounded-full bg-[radial-gradient(#fff_50%,transparent_52%)]"><FaSkype size={23} color="#0fa9ec" /><span className="absolute -right-px -bottom-px h-[10px] w-[10px] rounded-full border border-[#8fd022] bg-[#f4fbe4]" /></span> },
  { k: 'cmd', i: <span className="flex h-[19px] w-[23px] items-start border border-t-2 border-[#9a9a9a] bg-black pt-px pl-[2px] font-['Liberation_Mono'] text-[7px] leading-none text-white">C:\_</span> },
  { k: 'word', i: <Office c="#2a5699" t="w" /> },
  { k: 'it', i: <svg width="22" height="22" viewBox="0 0 22 22"><circle cx="11" cy="11" r="10" fill="#fff" stroke="#c86ad8" strokeWidth="1.500" /><path d="M8.500 14.500V6.500l6-1.500v8" fill="none" stroke="#d23f8e" strokeWidth="1.700" /><circle cx="7" cy="15" r="2" fill="#4a7ae8" /><circle cx="13" cy="13.500" r="2" fill="#c04fd0" /></svg> },
  { k: 'set', i: <svg width="20" height="20" viewBox="0 0 20 20"><circle cx="10" cy="10" r="5.500" fill="none" stroke="#fff" strokeWidth="3" /><circle cx="10" cy="10" r="8.300" fill="none" stroke="#fff" strokeWidth="2.800" strokeDasharray="3.260 3.260" /></svg> },
  { k: 'xl', i: <Office c="#1e7145" t="x" /> },
  { k: 'ph', i: <svg width="23" height="22" viewBox="0 0 23 22"><rect x=".5" y=".5" width="22" height="21" fill="#050505" stroke="#fff" /><path d="M1 21v-5l8-10 5 6 2-2 6 6v5z" fill="#fff" /></svg> },
  { k: 'wmp', i: <svg width="21" height="22" viewBox="0 0 21 22"><rect x="3" width="18" height="19" rx="1" fill="#b9def2" /><rect y="2" width="18" height="20" rx="1" fill="#6aaedb" /><circle cx="9" cy="12" r="7" fill="#f08224" /><path d="M6.500 8v8l7-4z" fill="#fff" /></svg> },
  { k: 'ig2', i: <Insta /> },
];

function Taskbar() {
  return (
    <div className="flex h-10 w-[1920px] shrink-0 items-stretch bg-[#080808] font-['Open_Sans',sans-serif]">
      <div className="flex w-12 shrink-0 items-center justify-center bg-gradient-to-b from-[#15100e] to-[#030303]">
        <svg width="16" height="16" viewBox="0 0 16 16"><path d="M0 2.300l6.500-.9v6H0zM7.300 1.300L16 0v7.400H7.300zM0 8.400h6.500v6.100L0 13.600zM7.300 8.400H16V16l-8.700-1.300z" fill="#fff" /></svg>
      </div>
      <div className="flex w-[344px] shrink-0 items-center bg-[#333] pl-[9px]">
        <svg width="22" height="22" viewBox="0 0 22 22"><circle cx="11" cy="11" r="9" fill="none" stroke="#fff" strokeWidth="2.800" /></svg>
        <span className="ml-[9px] pt-px text-[14.200px] text-[#9f9f9f]">Ask me anything</span>
        <svg className="mr-[15px] ml-auto" width="12" height="17" viewBox="0 0 12 17" fill="none" stroke="#9f9f9f"><rect x="3.500" y=".5" width="5" height="11" rx="1" /><path d="M1 8v5c0 1 1 1 2 1h6c1 0 2 0 2-1V8M6 14v2.500M3 16.500h6" /></svg>
      </div>
      <div className="ml-[2px] flex w-[44px] shrink-0 items-center justify-center"><svg width="21" height="15" viewBox="0 0 21 15" fill="none" stroke="#fff" strokeWidth="1.200"><rect x="4.500" y=".6" width="12" height="13.800" /><path d="M3 2.600H.7v10H3M18 2.600h2.300v10H18" /></svg></div>
      <div className="flex w-[43px] shrink-0 items-center justify-center"><svg width="22" height="24" viewBox="0 0 22 24"><path d="M0 8l14-2 7-1v18l-7 1L0 21z" fill="#fff" /><path d="M5 8V4a3 3 0 016 0M9 7V3a3 3 0 016 0v4" fill="none" stroke="#fff" strokeWidth="1.200" /><path d="M4 11l4.500-.4v4H4zM9.500 10.500l5.500-.5v4.600H9.500zM4 15.500h4.500v4.200L4 19.200zM9.500 15.500H15v5l-5.500-.7z" fill="#0a0a0a" /></svg></div>
      {apps.map((a) => (
        <div key={a.k} className={(a.u === 2 ? 'bg-[#363636] ' : '') + 'flex w-10 shrink-0 flex-col items-center'}>
          <span className="flex h-[38px] items-center pt-[2px]">{a.i}</span>
          {a.u && <span className={a.u === 2 ? 'h-[2px] w-full bg-[#ffaab2]' : 'h-[2px] w-[31px] bg-[#ffaab2]'} />}
        </div>
      ))}
      <div className="-ml-px flex">
        {apps2.map((a) => (
          <div key={a.k} className="flex w-[39px] shrink-0 flex-col items-center"><span className="flex h-[38px] items-center pt-[2px]">{a.i}</span><span className="h-[2px] w-[30px] bg-[#ffaab2]" /></div>
        ))}
      </div>
      <div className="ml-[8px] flex items-center text-white">
        <svg width="88" height="20" viewBox="0 0 88 20" fill="none" stroke="#fff" strokeWidth="1.200">
          <path d="M1 13l5.500-5.500L12 13" strokeWidth="1.500" />
          <path d="M23 7.500h2.500l4-4v13l-4-4H23zM32 8v4M34 6c1.500 2 1.500 6 0 8" /><path d="M36 4c2.500 3 2.500 9 0 12" stroke="#999" />
          <path d="M51.500 5.500h11v8h-11zM57 13.500v3M53 16.500h8M47.500 3.500v5h3M47.500 8v6.500" />
          <path d="M72 3h15v12h-5l-3 4v-4h-7z" fill="#fff" /><path d="M75 6.500h9M75 9h9M75 11.500h6" stroke="#111" />
        </svg>
      </div>
      <span className="ml-[9px] flex w-[28px] items-center text-[11.500px] text-white">ENG</span>
      <div className="ml-[8px] flex w-[60px] flex-col items-center justify-center text-[12px] leading-[17px] tracking-[-0.500px] whitespace-nowrap text-white"><span>5:23 PM</span><span>5/23/2016</span></div>
      <span className="ml-[5px] w-px bg-[#555]" />
    </div>
  );
}

export default function App() {
  return (
    <div className="relative flex h-[1080px] w-[1920px] flex-col overflow-hidden bg-[#999]">
      <Chrome />
      <Application />
      <Taskbar />
      <div className="font-['Liberation_Sans',Arial,sans-serif]"><Dialog /></div>
    </div>
  );
}
